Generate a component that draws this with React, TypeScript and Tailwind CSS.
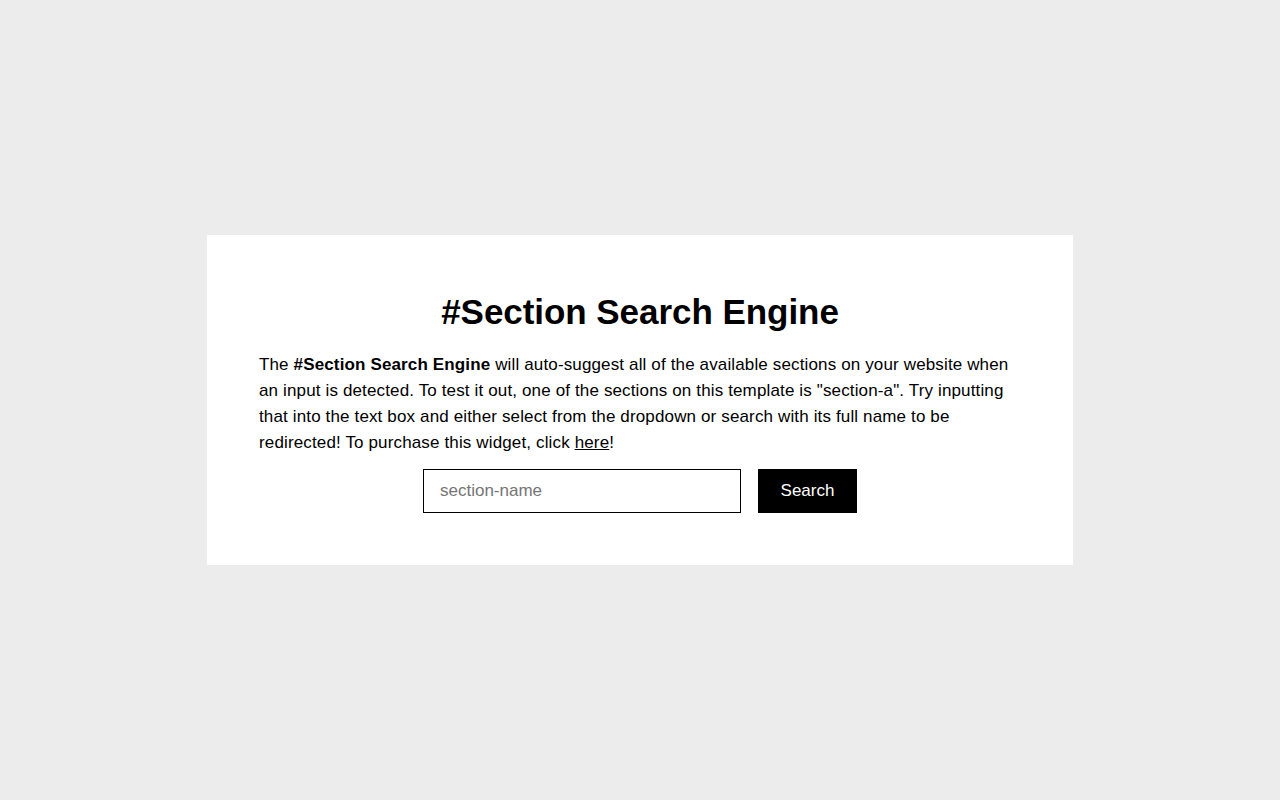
export default function App() {
  return (
    <div className="min-h-screen w-full bg-[#ececec] flex items-center justify-center font-['Liberation_Sans',Arial,sans-serif] text-black">
      <div className="w-[866px] bg-white px-[52px] pt-[55px] pb-[52px]">
        <h1 className="text-center text-[35px] font-bold leading-[44px] tracking-[-0.05px]">#Section Search Engine</h1>
        <p className="mt-[18px] text-[17px] leading-[26px] tracking-[0.14px]">
          The <b>#Section Search Engine</b> will auto-suggest all of the available sections on your website when an
          input is detected. To test it out, one of the sections on this template is "section-a". Try inputting that
          into the text box and either select from the dropdown or search with its full name to be redirected! To
          purchase this widget, click <a href="#" className="underline">here</a>!
        </p>
        <div className="mt-[13px] flex justify-center gap-[17px]">
          <input
            type="text"
            placeholder="section-name"
            className="h-[44px] w-[318px] border border-black px-[16px] text-[17px] outline-none placeholder:text-[#757575]"
          />
          <button className="h-[44px] w-[99px] bg-black text-[17px] text-white">Search</button>
        </div>
      </div>
    </div>
  );
}
